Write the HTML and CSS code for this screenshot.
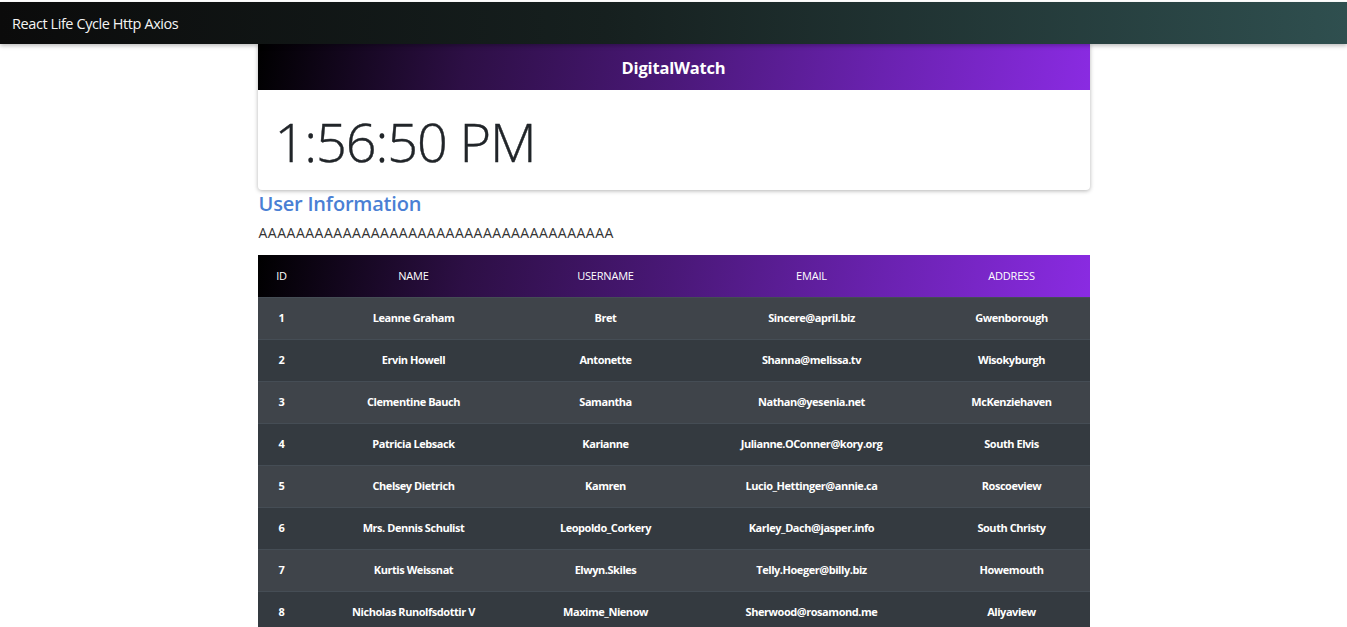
FILE: index.html
```html
<!DOCTYPE html>
<html>
<head>
<meta charset="utf-8">
<link rel="stylesheet" href="styles.css">
</head>
<body>
<nav class="navbar"><span class="brand">React Life Cycle Http Axios</span></nav>
<main class="container">
  <section class="card">
    <header class="card-header">DigitalWatch</header>
    <div class="card-body"><span class="time">1:56:50 PM</span></div>
  </section>
  <h2 class="title">User Information</h2>
  <p class="filler">AAAAAAAAAAAAAAAAAAAAAAAAAAAAAAAAAAAAAA</p>
  <table class="users">
    <colgroup>
      <col class="c-id"><col class="c-name"><col class="c-user"><col class="c-email"><col class="c-addr">
    </colgroup>
    <thead>
      <tr><th>ID</th><th>NAME</th><th>USERNAME</th><th>EMAIL</th><th>ADDRESS</th></tr>
    </thead>
    <tbody>
      <tr><td>1</td><td>Leanne Graham</td><td>Bret</td><td>Sincere@april.biz</td><td>Gwenborough</td></tr>
      <tr><td>2</td><td>Ervin Howell</td><td>Antonette</td><td>Shanna@melissa.tv</td><td>Wisokyburgh</td></tr>
      <tr><td>3</td><td>Clementine Bauch</td><td>Samantha</td><td>Nathan@yesenia.net</td><td>McKenziehaven</td></tr>
      <tr><td>4</td><td>Patricia Lebsack</td><td>Karianne</td><td>Julianne.OConner@kory.org</td><td>South Elvis</td></tr>
      <tr><td>5</td><td>Chelsey Dietrich</td><td>Kamren</td><td>Lucio_Hettinger@annie.ca</td><td>Roscoeview</td></tr>
      <tr><td>6</td><td>Mrs. Dennis Schulist</td><td>Leopoldo_Corkery</td><td>Karley_Dach@jasper.info</td><td>South Christy</td></tr>
      <tr><td>7</td><td>Kurtis Weissnat</td><td>Elwyn.Skiles</td><td>Telly.Hoeger@billy.biz</td><td>Howemouth</td></tr>
      <tr><td>8</td><td>Nicholas Runolfsdottir V</td><td>Maxime_Nienow</td><td>Sherwood@rosamond.me</td><td>Aliyaview</td></tr>
    </tbody>
  </table>
</main>
</body>
</html>
```

FILE: styles.css
```css
* { box-sizing: border-box; }
html, body { margin: 0; padding: 0; }
body {
  font-family: "Open Sans", "Noto Sans", "Liberation Sans", sans-serif;
  color: #212529;
  background: #fff;
  padding-top: 2px;
  overflow: hidden;
}
.navbar {
  height: 42px;
  display: flex;
  align-items: center;
  padding: 0 12px;
  background: linear-gradient(to right, #0b0b0b 0%, #16201f 45%, #2f4f4f 100%);
  box-shadow: 0 2px 4px rgba(0,0,0,0.25);
  position: relative;
  z-index: 2;
}
.brand {
  color: #f4f4f4;
  font-size: 14.5px;
  letter-spacing: -0.42px;
}
.container {
  width: 832px;
  margin: 0 auto;
}
.card {
  background: #fff;
  border-radius: 0 0 4px 4px;
  box-shadow: 0 1px 4px rgba(0,0,0,0.3);
}
.card-header {
  height: 46px;
  display: flex;
  align-items: center;
  justify-content: center;
  color: #fff;
  font-weight: 700;
  font-size: 16.5px;
  letter-spacing: -0.2px;
  background: linear-gradient(100deg, #000 0%, #2d0f45 25%, #4a1878 50%, #6a22b0 75%, #8a2be2 100%);
}
.card-body {
  height: 100px;
  display: flex;
  align-items: center;
  padding: 0 17px;
}
.time {
  font-size: 54px;
  font-weight: 300;
  color: #212529;
  letter-spacing: -1.1px;
  padding-top: 2px;
  -webkit-text-stroke: 0.4px #212529;
}
.title {
  margin: 1px 0 0 1px;
  font-size: 20px;
  font-weight: 600;
  color: #4a7fd4;
  line-height: 26px;
  letter-spacing: -0.2px;
}
.filler {
  margin: 7px 0 0 1px;
  font-size: 14px;
  color: #333;
  line-height: 18px;
  letter-spacing: 0.5px;
}
.users {
  margin-top: 13px;
  width: 832px;
  border-collapse: collapse;
  table-layout: fixed;
  font-size: 11px;
  color: #fff;
}
.c-id { width: 48px; }
.c-name { width: 216px; }
.c-user { width: 168px; }
.c-email { width: 244px; }
.c-addr { width: 156px; }
.users thead tr {
  background: linear-gradient(100deg, #000 0%, #2d0f45 25%, #4a1878 50%, #6a22b0 75%, #8a2be2 100%);
}
.users th {
  height: 42px;
  font-weight: 400;
  text-align: center;
  letter-spacing: -0.2px;
}
.users td {
  height: 42px;
  padding: 0 1px 2px;
  text-align: center;
  font-weight: 700;
  border-top: 1px solid #454d55;
  letter-spacing: -0.45px;
}
.users tbody tr:nth-child(odd) { background: #3f444a; }
.users tbody tr:nth-child(even) { background: #343a40; }
```
